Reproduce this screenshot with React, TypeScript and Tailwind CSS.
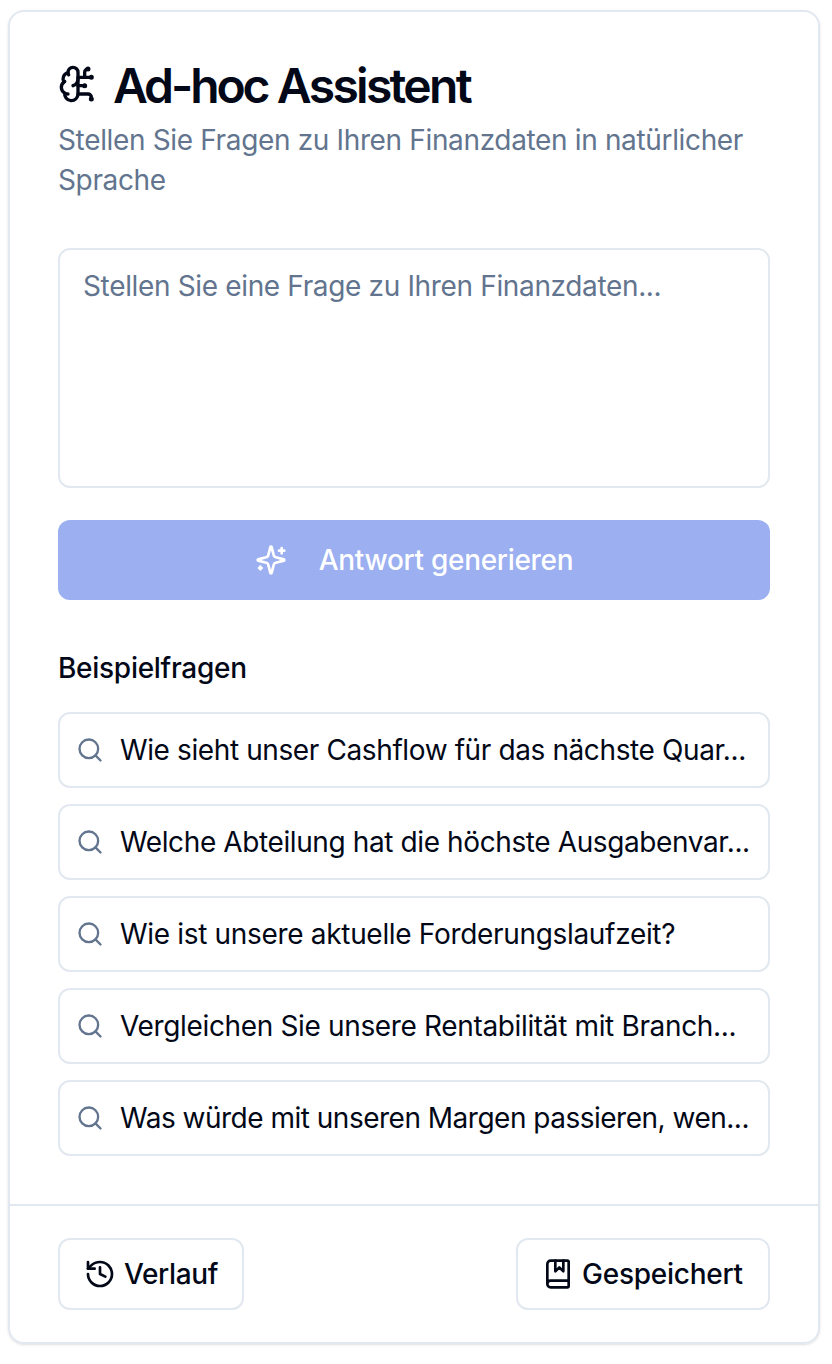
import type { ReactNode } from "react";
import { BookMarked, BrainCircuit, History, Search } from "lucide-react";

const questions = [
  { text: "Wie sieht unser Cashflow für das nächste Quar...", spacing: "tracking-[-0.39px]" },
  { text: "Welche Abteilung hat die höchste Ausgabenvar...", spacing: "tracking-[-0.39px]" },
  { text: "Wie ist unsere aktuelle Forderungslaufzeit?", spacing: "tracking-[-0.32px]" },
  { text: "Vergleichen Sie unsere Rentabilität mit Branch...", spacing: "tracking-[-0.35px]" },
  { text: "Was würde mit unseren Margen passieren, wen...", spacing: "tracking-[-0.5px]" },
];

const Sparkles = () => (
  <svg
    viewBox="0 0 24 24"
    fill="none"
    stroke="currentColor"
    strokeWidth="2"
    strokeLinecap="round"
    strokeLinejoin="round"
    className="size-8"
  >
    <path d="M9.937 15.5A2 2 0 0 0 8.5 14.063l-6.135-1.582a.5.5 0 0 1 0-.962L8.5 9.936A2 2 0 0 0 9.937 8.5l1.582-6.135a.5.5 0 0 1 .963 0L14.063 8.5A2 2 0 0 0 15.5 9.937l6.135 1.581a.5.5 0 0 1 0 .964L15.5 14.063a2 2 0 0 0-1.437 1.437l-1.582 6.135a.5.5 0 0 1-.963 0z" />
    <path d="M20 3v4" />
    <path d="M22 5h-4" />
    <path d="M4 17v2" />
    <path d="M5 18H3" />
  </svg>
);

const FooterButton = ({ className, children }: { className: string; children: ReactNode }) => (
  <button
    className={`flex h-[72px] items-center gap-2 rounded-xl border-2 border-slate-200 pl-6 font-medium whitespace-nowrap ${className}`}
  >
    {children}
  </button>
);

export default function App() {
  return (
    <div className="h-[1364px] w-[832px] bg-white px-2 pt-2.5 font-['Inter',sans-serif] text-[28px] leading-10 text-[#020817]">
      <div className="flex h-[1334px] w-[812px] flex-col rounded-2xl border-2 border-slate-200 shadow-sm">
        <div className="flex-1 px-12 pt-12">
          <header>
            <h1 className="flex h-12 items-center gap-[15px] text-[48px] leading-none font-semibold whitespace-nowrap">
              <BrainCircuit className="size-10 shrink-0" />
              <span className="pt-[3px] tracking-[-2.7px]">
                <span className="tracking-[-3.1px]">Ad-hoc</span> Assistent
              </span>
            </h1>
            <p className="mt-3 tracking-[-0.35px] text-slate-500">
              Stellen Sie Fragen zu Ihren Finanzdaten in natürlicher Sprache
            </p>
          </header>

          <textarea
            placeholder="Stellen Sie eine Frage zu Ihren Finanzdaten..."
            className="mt-12 block h-60 w-full resize-none rounded-xl border-2 border-slate-200 px-[23px] py-4 tracking-[-0.35px] placeholder:text-slate-500"
          />
          <button className="mt-8 flex h-20 w-full items-center justify-center gap-8 rounded-xl bg-[#9bafF1] font-medium text-white">
            <Sparkles />
            <span className="tracking-[-0.3px]">Antwort generieren</span>
          </button>

          <h2 className="mt-12 font-medium tracking-[-0.28px]">Beispielfragen</h2>
          <ul className="mt-6 flex flex-col gap-4">
            {questions.map((q) => (
              <li
                key={q.text}
                className="flex h-[76px] items-center gap-4 rounded-xl border-2 border-slate-200 px-4 whitespace-nowrap"
              >
                <Search className="size-7 shrink-0 text-slate-500" />
                <span className={q.spacing}>{q.text}</span>
              </li>
            ))}
          </ul>
        </div>

        <footer className="flex h-[138px] justify-between border-t-2 border-slate-200 px-12 pt-8">
          <FooterButton className="w-[186px]">
            <History className="size-8" />
            <span className="tracking-[-0.35px]">Verlauf</span>
          </FooterButton>
          <FooterButton className="w-[254px]">
            <BookMarked className="size-8" />
            <span className="tracking-[-0.25px]">Gespeichert</span>
          </FooterButton>
        </footer>
      </div>
    </div>
  );
}
